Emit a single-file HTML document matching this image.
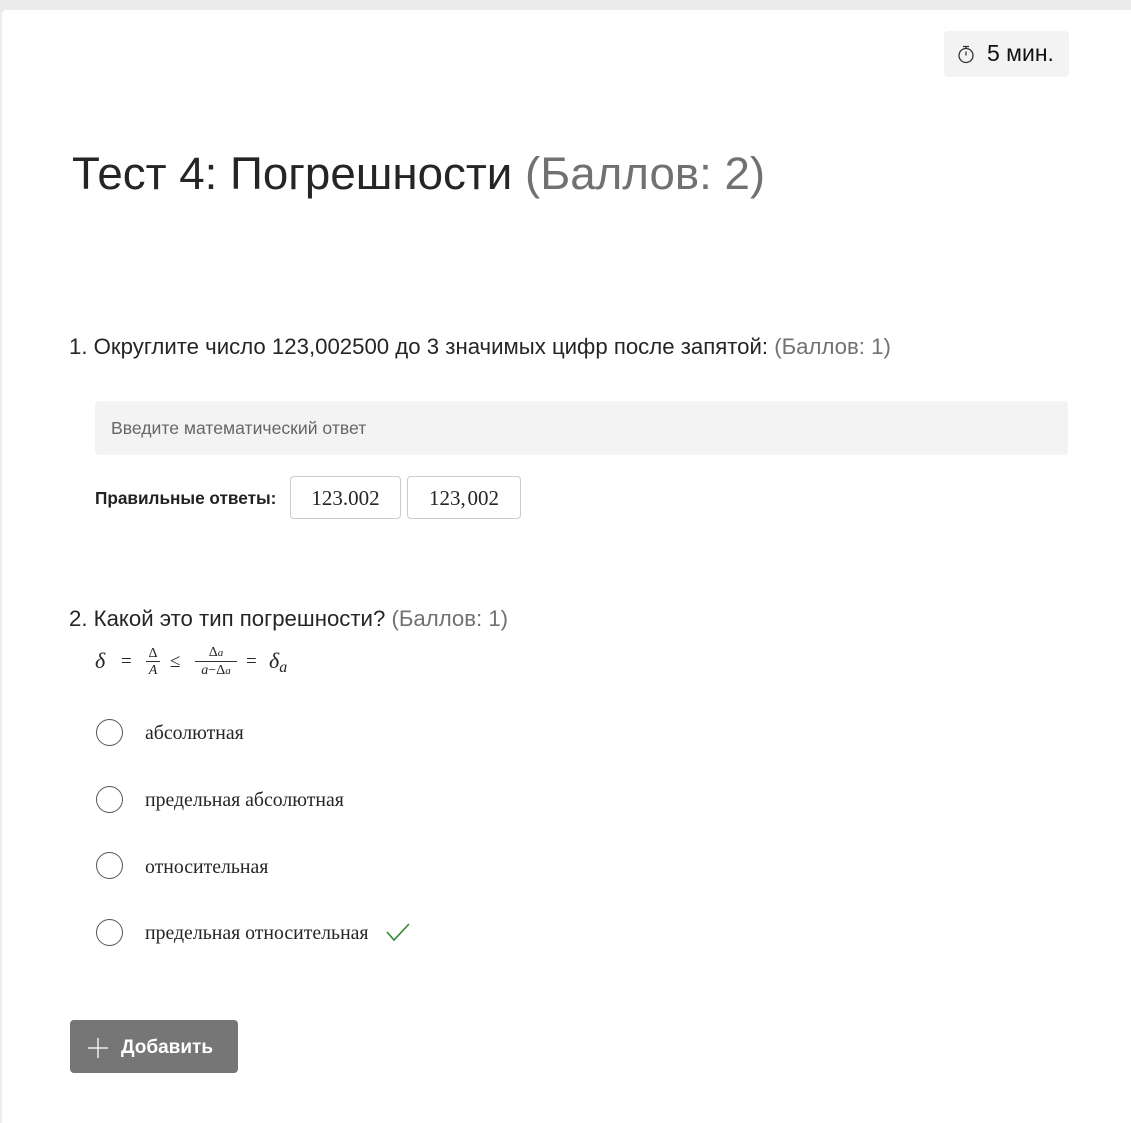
<!DOCTYPE html>
<html><head><meta charset="utf-8"><style>
body{margin:0;width:1131px;height:1123px;background:#ececec;position:relative;overflow:hidden;font-family:"Liberation Sans","DejaVu Sans",sans-serif;color:#252525}
.card{position:absolute;left:2px;top:10px;width:1129px;height:1113px;background:#fff;border-radius:4px 0 0 0}
.a{position:absolute;white-space:nowrap}
.g{color:#717171}
.serif{font-family:"Liberation Serif",serif}
.radio{position:absolute;left:96px;width:27px;height:27px;border:1.6px solid #555;border-radius:50%;box-sizing:border-box}
</style></head><body>
<div class="card"></div>
<div class="a" style="left:944px;top:31px;width:125px;height:46px;background:#f3f3f3;border-radius:4px"></div>
<svg class="a" style="left:957px;top:44px" width="18" height="20" viewBox="0 0 18 20"><circle cx="9" cy="11.5" r="7" fill="none" stroke="#333" stroke-width="1.3"/><path d="M6 2.5h6M9 2.5v2M9 11.5V7.5" stroke="#333" stroke-width="1.3" fill="none"/></svg>
<div class="a" style="left:987px;top:40px;font-size:23px;color:#111">5 мин.</div>
<div class="a" style="left:72px;top:148px;font-size:45.7px;color:#252525">Тест 4: Погрешности <span class="g">(Баллов: 2)</span></div>
<div class="a" style="left:69px;top:334px;font-size:22.2px">1. Округлите число 123,002500 до 3 значимых цифр после запятой: <span class="g">(Баллов: 1)</span></div>
<div class="a" style="left:95px;top:401px;width:973px;height:54px;background:#f3f3f3;border-radius:4px"></div>
<div class="a" style="left:111px;top:418px;font-size:17.6px;color:#666">Введите математический ответ</div>
<div class="a" style="left:95px;top:488px;font-size:17.2px;font-weight:bold;color:#222">Правильные ответы:</div>
<div class="a serif" style="left:290px;top:476px;width:111px;height:43px;border:1px solid #ccc;border-radius:4px;box-sizing:border-box;text-align:center;line-height:42px;font-size:21px">123.002</div>
<div class="a serif" style="left:407px;top:476px;width:114px;height:43px;border:1px solid #ccc;border-radius:4px;box-sizing:border-box;text-align:center;line-height:42px;font-size:21px">123,&#8202;002</div>
<div class="a" style="left:69px;top:606px;font-size:22.2px">2. Какой это тип погрешности? <span class="g">(Баллов: 1)</span></div>
<div class="a serif" style="left:95px;top:648px;font-size:22px"><i>δ</i></div>
<div class="a serif" style="left:121px;top:651px;font-size:19px">=</div>
<div class="a serif" style="left:146px;top:647px;font-size:14px;text-align:center;width:14px;line-height:14px">Δ<br><span style="display:block;border-top:1px solid #333;padding-top:2px"><i>A</i></span></div>
<div class="a serif" style="left:170px;top:651px;font-size:19px">≤</div>
<div class="a serif" style="left:195px;top:645px;font-size:14px;text-align:center;width:42px;line-height:15px">Δ<i style="font-size:11px">a</i><br><span style="display:block;border-top:1px solid #333;padding-top:1px"><i>a</i>−Δ<i style="font-size:11px">a</i></span></div>
<div class="a serif" style="left:246px;top:651px;font-size:19px">=</div>
<div class="a serif" style="left:269px;top:648px;font-size:22px"><i>δ</i><i style="font-size:16px;position:relative;top:4px">a</i></div>
<div class="radio" style="top:719px"></div>
<div class="a serif" style="left:145px;top:722px;font-size:19.8px">абсолютная</div>
<div class="radio" style="top:786px"></div>
<div class="a serif" style="left:145px;top:789px;font-size:19.8px">предельная абсолютная</div>
<div class="radio" style="top:852px"></div>
<div class="a serif" style="left:145px;top:856px;font-size:19.8px">относительная</div>
<div class="radio" style="top:919px"></div>
<div class="a serif" style="left:145px;top:922px;font-size:19.8px">предельная относительная</div>
<svg class="a" style="left:385px;top:922px" width="26" height="20" viewBox="0 0 26 20"><path d="M2 10l7 8L24 2" fill="none" stroke="#2e8b2e" stroke-width="1.6"/></svg>
<div class="a" style="left:70px;top:1020px;width:168px;height:53px;background:#767676;border-radius:4px"></div>
<svg class="a" style="left:87px;top:1037px" width="22" height="22" viewBox="0 0 22 22"><path d="M11 1v20M1 11h20" stroke="#eee" stroke-width="1.5"/></svg>
<div class="a" style="left:121px;top:1037px;font-size:19px;font-weight:bold;color:#fff">Добавить</div>
</body></html>
